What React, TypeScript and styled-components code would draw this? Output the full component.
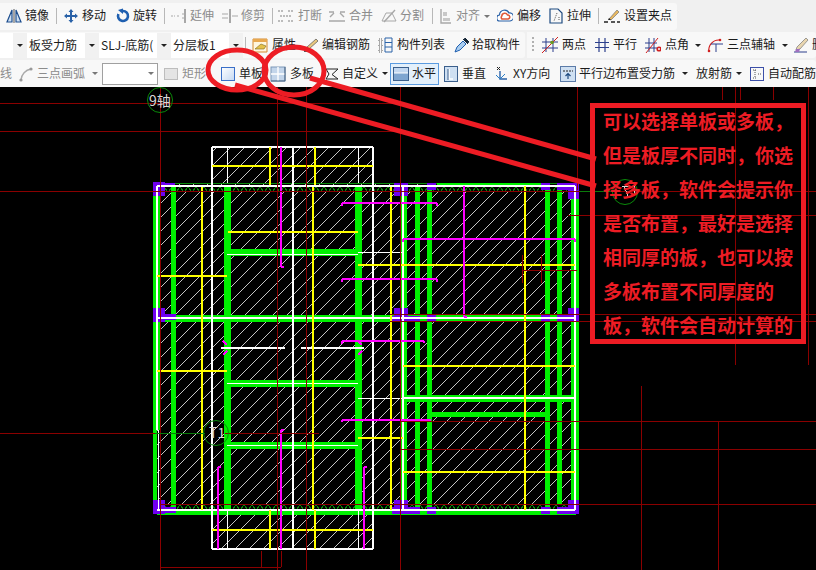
import { ReactNode } from "react";
import styled, { createGlobalStyle } from "styled-components";

const GlobalStyle = createGlobalStyle`
  html, body {
    margin: 0;
    background: #000;
    overflow: hidden;
  }
`;

type IconProps = { children: ReactNode };

function Ico({ children }: IconProps) {
  return (
    <svg width="16" height="16" viewBox="0 0 16 16" fill="none">
      {children}
    </svg>
  );
}

const MirrorIcon = () => (
  <Ico>
    <path d="M6 2 L1 14 H6 Z M10 2 L15 14 H10 Z" stroke="#1f4f8f" strokeWidth="1.2" fill="#cfe0f2" />
    <path d="M8 1 V15" stroke="#555" />
  </Ico>
);
const MoveIcon = () => (
  <Ico>
    <path d="M8 1 L10.5 4 H9 V7 H12 V5.5 L15 8 L12 10.5 V9 H9 V12 H10.5 L8 15 L5.5 12 H7 V9 H4 V10.5 L1 8 L4 5.5 V7 H7 V4 H5.5 Z" fill="#2a62a8" />
  </Ico>
);
const RotateIcon = () => (
  <Ico>
    <path d="M8 3 A5 5 0 1 1 3.4 6" stroke="#1f5fb0" strokeWidth="2.6" />
    <path d="M3 2 L8 0.5 V6 Z" fill="#1f5fb0" />
  </Ico>
);
const ExtendIcon = () => (
  <Ico>
    <path d="M0 8 H4 M6 8 H9 M11 6 H13 M11 10 H13" stroke="#a8a8a8" strokeDasharray="2 1" />
    <path d="M14 1 V15" stroke="#a8a8a8" strokeWidth="2" />
  </Ico>
);
const TrimIcon = () => (
  <Ico>
    <path d="M0 6 H6 M0 10 H6 M10 8 H16" stroke="#a8a8a8" />
    <path d="M8 1 V15" stroke="#a8a8a8" strokeWidth="2" />
  </Ico>
);
const BreakIcon = () => (
  <Ico>
    <path d="M0 3 H6 M10 3 H16 M0 13 H6 M10 13 H16 M2 8 H14" stroke="#a8a8a8" strokeWidth="1.4" strokeDasharray="2 1" />
  </Ico>
);
const MergeIcon = () => (
  <Ico>
    <path d="M0 13 H16 M1 9 L5 5 M15 9 L11 5 M0 4 H5 M11 4 H16" stroke="#a8a8a8" strokeWidth="1.4" />
  </Ico>
);
const SplitIcon = () => (
  <Ico>
    <path d="M1 13 H15 L11 5 H5 Z" stroke="#a8a8a8" />
    <path d="M3 14 L14 2" stroke="#a8a8a8" strokeWidth="1.4" />
  </Ico>
);
const AlignIcon = () => (
  <Ico>
    <path d="M2 1 V15 H12" stroke="#a8a8a8" strokeWidth="1.4" />
    <path d="M4 4 H8 V8 H4 Z M4 10 H11 V13 H4 Z" fill="#c8c8c8" />
  </Ico>
);
const OffsetIcon = () => (
  <Ico>
    <path d="M3 13 A3 3 0 0 1 2.5 7 A5 5 0 0 1 12 5 A4 4 0 0 1 13 13 Z" stroke="#2a62a8" strokeWidth="1.2" fill="#fff" />
    <path d="M5 11 A2 2 0 0 1 4.8 8 A3 3 0 0 1 10.5 7 A2 2 0 0 1 11 11 Z" stroke="#e05a3a" strokeWidth="1.6" />
  </Ico>
);
const StretchIcon = () => (
  <Ico>
    <path d="M2 1 H10 L14 5 V15 H2 Z" stroke="#1d4a80" strokeWidth="1.2" />
    <path d="M9 5 L6 13 M11 9 L11 13" stroke="#555" strokeDasharray="1 1" />
  </Ico>
);
const GripIcon = () => (
  <Ico>
    <path d="M0 14 H4 M7 14 H11 M13 14 H16" stroke="#222" strokeWidth="1.6" />
    <path d="M5 11 L13 2 L15 4 L7 12 Z" fill="#e8b860" stroke="#777" strokeWidth="0.7" />
    <path d="M4 12 L5 10 L7 12 Z" fill="#222" />
  </Ico>
);
const PropsIcon = () => (
  <Ico>
    <path d="M1 2 H15 V15 H1 Z" stroke="#d48a30" fill="#fff6df" />
    <path d="M1 2 H15 V5 H1 Z" fill="#e8a850" />
    <path d="M3 12 L9 7 L14 9 L12 12 Z" fill="#e5c14a" stroke="#7a6a20" strokeWidth="0.6" />
  </Ico>
);
const EditBarIcon = () => (
  <Ico>
    <path d="M1 14 H11" stroke="#222" strokeWidth="1.4" />
    <path d="M4 10 L13 2 L15 4 L6 12 L3 13 Z" fill="#e8c880" stroke="#555" strokeWidth="0.7" />
  </Ico>
);
const ListIcon = () => (
  <Ico>
    <path d="M1 2 H4 V5 H1 Z M1 7 H4 V10 H1 Z M1 12 H4 V15 H1 Z" stroke="#333" strokeWidth="0.8" strokeDasharray="1 1" />
    <path d="M7 1 H14 V15 H7 Z M7 5.5 H14 M7 10 H14" stroke="#2a62a8" />
  </Ico>
);
const PickIcon = () => (
  <Ico>
    <path d="M1 15 L3 10 L9 4 L12 7 L6 13 Z" fill="#a9cdf0" stroke="#1f5fb0" />
    <path d="M9 2 L14 7 M11 1 L15 5 L13 6 L10 3 Z" fill="#123" stroke="#123" />
  </Ico>
);
const TwoPointIcon = () => (
  <Ico>
    <path d="M0 5 H16 M0 11 H16 M4 1 V15" stroke="#2c3f8c" />
    <path d="M11 1 V15" stroke="#2c3f8c" />
    <path d="M0 16 L16 0" stroke="#d02020" />
    <circle cx="10" cy="5.5" r="1.8" fill="#6a9a20" />
  </Ico>
);
const ParallelIcon = () => (
  <Ico>
    <path d="M1 5.5 H15 M1 10.5 H15 M5 1 V15 M11 1 V15" stroke="#2c3f8c" strokeWidth="1.2" />
  </Ico>
);
const AngleIcon = () => (
  <Ico>
    <path d="M0 6 H12 M0 11 H12 M4 1 V15 M9 1 V15" stroke="#2c3f8c" />
    <path d="M1 16 L13 1" stroke="#d02020" />
    <circle cx="14" cy="12" r="1.8" stroke="#d02020" strokeWidth="1.6" />
  </Ico>
);
const ArcAxisIcon = () => (
  <Ico>
    <path d="M2 15 A10 10 0 0 1 12 3" stroke="#d02020" strokeWidth="1.2" />
    <path d="M4 7 H16 M9 7 V15" stroke="#2c3f8c" />
    <circle cx="2" cy="14" r="1.3" fill="#d02020" />
    <circle cx="13" cy="3" r="1.3" fill="#d02020" />
  </Ico>
);
const DeleteAxisIcon = () => (
  <Ico>
    <path d="M1 15 H14" stroke="#2c3f8c" />
    <path d="M4 10 L13 1 L15 3 L7 12 L3 13 Z" fill="#e9d6b0" stroke="#777" strokeWidth="0.7" />
    <path d="M3 12 L7 12 L6 15 H2 Z" fill="#a070c0" />
  </Ico>
);
const ArcIcon = () => (
  <Ico>
    <path d="M3 14 A12 12 0 0 1 13 3" stroke="#aaa" strokeWidth="1.4" />
    <circle cx="3" cy="14" r="1.6" fill="#999" />
    <circle cx="13" cy="3" r="1.6" fill="#999" />
  </Ico>
);
const RectIcon = () => (
  <Ico>
    <rect x="1.5" y="2.5" width="13" height="11" fill="#e4e4e4" stroke="#bdbdbd" />
  </Ico>
);
const SinglePlateIcon = () => (
  <Ico>
    <defs>
      <linearGradient id="plate" x1="0" y1="0" x2="1" y2="1">
        <stop offset="0" stopColor="#fff" />
        <stop offset="1" stopColor="#c5d8f2" />
      </linearGradient>
    </defs>
    <rect x="1.5" y="1.5" width="13" height="13" fill="url(#plate)" stroke="#3a6fc8" />
  </Ico>
);
const MultiPlateIcon = () => (
  <Ico>
    <rect x="1" y="1" width="14" height="14" fill="#c3d5ea" stroke="#7c97b8" />
    <path d="M8 1 V15 M1 8 H15" stroke="#fff" strokeWidth="1.4" />
    <path d="M15 1 V15 H1" stroke="#44607f" />
  </Ico>
);
const CustomIcon = () => (
  <Ico>
    <path d="M2 3 H14 L8 8.5 L14 13 H2 L5 8 Z" stroke="#222" />
  </Ico>
);
const HorizontalIcon = () => (
  <Ico>
    <rect x="0.5" y="1.5" width="15" height="13" fill="#c3d8f0" stroke="#3b5f8c" />
    <path d="M1 7 H15 V14 H1 Z" fill="#7fa6d0" />
    <path d="M1 7 H15" stroke="#fff" />
  </Ico>
);
const VerticalIcon = () => (
  <Ico>
    <rect x="1.5" y="0.5" width="13" height="15" fill="#cfe0f2" stroke="#3b5f8c" />
    <path d="M6 3 V13 H10" stroke="#fff" strokeWidth="1.6" />
    <path d="M5 3 V14" stroke="#3b5f8c" />
  </Ico>
);
const XYIcon = () => (
  <Ico>
    <path d="M6 5 V13 H13" stroke="#2a62a8" strokeWidth="1.4" />
    <path d="M6 13 L2 9 M6 13 L11 8" stroke="#2a7fc8" />
    <path d="M3 1 L6 4 M6 1 L3 4" stroke="#222" />
  </Ico>
);
const ParallelEdgeIcon = () => (
  <Ico>
    <rect x="0.5" y="0.5" width="15" height="15" fill="#cfe0f2" stroke="#5b7ba8" />
    <path d="M3 5 H13" stroke="#222" strokeDasharray="2 1" />
    <path d="M8 13 V8 M5.5 10 L8 7.5 L10.5 10" stroke="#1d4a80" strokeWidth="1.2" />
  </Ico>
);
const AutoBarIcon = () => (
  <Ico>
    <rect x="1.5" y="1.5" width="13" height="13" stroke="#3b4fa8" />
    <path d="M6 4 V12 M4 4 H8 M4 12 H8 M9 8 H13" stroke="#555" strokeDasharray="1 1" />
  </Ico>
);

type ToolProps = {
  w: number;
  iw?: number;
  icon?: ReactNode;
  label: string;
  muted?: boolean;
  caret?: number;
  lead?: number;
};

function Tool({ w, iw = 19, icon, label, muted, caret, lead }: ToolProps) {
  return (
    <ToolItem $w={w} $lead={lead}>
      {icon && <IconBox $w={iw}>{icon}</IconBox>}
      <ToolLabel $muted={muted}>{label}</ToolLabel>
      {caret !== undefined && <Caret $gap={caret} $muted={muted} />}
    </ToolItem>
  );
}

function Combo({ w, label }: { w: number; label?: string }) {
  return (
    <ComboBox $w={w}>
      <ComboField>{label}</ComboField>
      <ComboButton>
        <Caret $gap={0} />
      </ComboButton>
    </ComboBox>
  );
}

type Seg = [number, number, number, number];

const toPath = (segs: Seg[]) =>
  segs.map(([a, b, c, d]) => `M${a} ${b}L${c} ${d}`).join("");

const greenThick: [number, Seg[]][] = [
  [5, [[173, 187, 173, 510], [417, 187, 417, 510], [429, 187, 429, 510], [547, 187, 547, 510], [559, 187, 559, 505], [430, 414, 547, 414]]],
  [7, [[227, 187, 227, 510], [358, 187, 358, 510], [403, 187, 403, 510], [574, 187, 574, 510], [227, 252, 358, 252], [227, 383, 358, 383], [227, 445, 358, 445], [403, 398, 575, 398], [155, 318, 579, 318], [157, 187, 157, 430]]],
  [4, [[155, 183, 155, 514]]],
  [3, [[577, 183, 577, 514], [437, 184, 541, 184]]],
  [5, [[157, 512, 576, 512]]],
];

const whiteThick: Seg[] = [
  [212, 147, 373, 147], [212, 549, 373, 549], [212, 147, 212, 549], [373, 147, 373, 549], [293, 147, 293, 549],
  [157, 186, 575, 186], [157, 318, 575, 318], [157, 510, 575, 510], [157, 186, 157, 430], [403, 186, 403, 510], [575, 186, 575, 510], [403, 398, 575, 398],
  [221, 348, 285, 348], [301, 348, 364, 348],
];

const whiteThin: Seg[] = [
  [358, 252, 403, 252], [358, 398, 403, 398], [227, 254, 358, 254], [227, 383, 358, 383], [227, 445, 358, 445],
  [227, 147, 227, 183], [358, 147, 358, 183], [227, 510, 227, 549], [358, 510, 358, 549], [158, 430, 158, 510],
];

const yellow: Seg[] = [
  [202, 187, 202, 510], [313, 187, 313, 510], [391, 187, 391, 510], [525, 186, 525, 510],
  [270, 147, 270, 185], [315, 147, 315, 185], [270, 510, 270, 549], [315, 510, 315, 549],
  [212, 166, 373, 166], [212, 530, 373, 530], [228, 232, 358, 232], [157, 276, 227, 276], [157, 371, 227, 371],
  [358, 265, 575, 265], [358, 438, 403, 438], [403, 366, 575, 366], [403, 472, 575, 472],
];

const magenta: Seg[] = [
  [281, 147, 281, 267], [281, 430, 281, 549], [218, 467, 218, 549], [364, 467, 364, 549], [464, 186, 464, 317],
  [342, 203, 437, 203], [342, 279, 437, 279], [342, 341, 424, 341], [342, 420, 431, 420], [403, 239, 575, 239],
  [342, 203, 342, 206], [437, 203, 437, 206], [342, 279, 342, 282], [437, 279, 437, 282], [342, 341, 342, 344], [424, 341, 424, 343],
  [342, 420, 342, 422], [403, 239, 403, 242], [575, 239, 575, 242], [464, 317, 467, 317], [281, 267, 284, 267], [281, 430, 284, 430],
  [218, 467, 221, 467], [364, 467, 367, 467], [223, 341, 227, 345], [358, 341, 362, 345], [223, 355, 227, 351], [358, 355, 362, 351],
];

const purple: [number, number, number, number][] = [
  [153, 182, 12, 14], [158, 183, 17, 3], [153, 308, 12, 14], [158, 314, 18, 6], [153, 500, 12, 14], [158, 507, 18, 6],
  [394, 183, 14, 13], [427, 183, 9, 7], [541, 183, 9, 7], [557, 183, 11, 7], [568, 183, 11, 16],
  [394, 308, 14, 14], [392, 316, 28, 6], [427, 314, 9, 8], [541, 314, 9, 8], [557, 314, 11, 8], [568, 308, 11, 14],
  [394, 500, 14, 14], [392, 507, 28, 7], [427, 507, 9, 7], [541, 507, 9, 7], [557, 507, 11, 7], [568, 500, 11, 14],
];

const axis: Seg[] = [
  [160, 87, 160, 570], [277, 87, 277, 570], [306, 87, 306, 570], [400, 87, 400, 570], [577, 87, 577, 190],
  [641, 386, 641, 570], [718, 421, 718, 570], [735, 87, 735, 365], [808, 87, 808, 365], [722, 87, 722, 100], [740, 87, 740, 100], [773, 87, 773, 100],
  [0, 103, 400, 103], [0, 131, 400, 131], [0, 191, 816, 191], [0, 433, 155, 433], [225, 433, 319, 433],
  [160, 504, 816, 504], [400, 421, 816, 421], [400, 449, 816, 449], [390, 314, 816, 314], [390, 321, 816, 321], [568, 215, 816, 215],
  [160, 567, 281, 567], [261, 551, 261, 567], [281, 551, 281, 567], [522, 255, 522, 283], [541, 255, 541, 283], [522, 270, 577, 270],
];

const calloutLines = [
  "可以选择单板或多板，",
  "但是板厚不同时，你选",
  "择多板，软件会提示你",
  "是否布置，最好是选择",
  "相同厚的板，也可以按",
  "多板布置不同厚度的",
  "板，软件会自动计算的",
];

function PlanDrawing() {
  return (
    <DrawingSvg viewBox="0 87 816 483" shapeRendering="crispEdges">
      <defs>
        <pattern id="hatch" width="14" height="14" patternUnits="userSpaceOnUse">
          <path d="M0 14 L14 0" stroke="#c4c4c4" shapeRendering="auto" />
        </pattern>
        <pattern id="edge" width="8" height="6" patternUnits="userSpaceOnUse">
          <path d="M0 6 L4 1 L8 6" stroke="#0a8a0a" fill="none" />
        </pattern>
      </defs>
      <path d="M212 147H373V183H579V513H373V549H212V513H155V183H212Z" fill="url(#hatch)" />
      <rect x="157" y="185" width="418" height="6" fill="#000" />
      <rect x="157" y="185" width="418" height="6" fill="url(#edge)" />
      <rect x="157" y="505" width="418" height="6" fill="#000" />
      <rect x="157" y="505" width="418" height="6" fill="url(#edge)" />
      <path d="M155 183.5H579M155 191.5H579M155 513.5H576" stroke="#0a8a0a" />
      {greenThick.map(([width, segs]) => (
        <path key={width + segs.length} d={toPath(segs)} stroke="#00f000" strokeWidth={width} />
      ))}
      {purple.map(([x, y, w, h]) => (
        <rect key={`${x}-${y}`} x={x} y={y} width={w} height={h} fill="#7000f0" />
      ))}
      <path d={toPath(whiteThick)} stroke="#fff" strokeWidth="2" />
      <path d={toPath(whiteThin)} stroke="#fff" />
      <path d={toPath(yellow)} stroke="#ffff00" strokeWidth="2" />
      <path d={toPath(magenta)} stroke="#ff00ff" strokeWidth="2" />
      <path d={toPath(axis)} stroke="#8a0000" />
      <path d="M155 433H205M580 191H612" stroke="#0a7a0a" />
      <circle cx="160" cy="100" r="12.5" stroke="#0a8a0a" fill="none" shapeRendering="auto" />
      <AxisText x="149" y="106">9轴</AxisText>
      <circle cx="216" cy="433" r="12.5" stroke="#0a8a0a" fill="none" shapeRendering="auto" />
      <AxisText x="209" y="438">T1</AxisText>
      <circle cx="625" cy="192" r="12.5" stroke="#0a8a0a" fill="none" shapeRendering="auto" />
      <path d="M622 186H630M624 186L628 196M634 184V195" stroke="#d8d8d8" />
    </DrawingSvg>
  );
}

function Annotations() {
  return (
    <AnnotationSvg viewBox="0 0 816 570">
      <ellipse cx="237" cy="70" rx="29" ry="20" />
      <ellipse cx="294" cy="71" rx="30" ry="24" />
      <path d="M235 85 L596 186 M310 78 L596 159" />
    </AnnotationSvg>
  );
}

export default function App() {
  return (
    <Page>
      <GlobalStyle />
      <Toolbar>
        <Band>
          <Panel $w={677} $pad={6}>
            <Tool w={50} icon={<MirrorIcon />} label="镜像" />
            <Sep $w={7} />
            <Tool w={52} icon={<MoveIcon />} label="移动" />
            <Tool w={49} iw={18} icon={<RotateIcon />} label="旋转" />
            <Sep $w={7} />
            <Tool w={51} icon={<ExtendIcon />} label="延伸" muted />
            <Tool w={50} icon={<TrimIcon />} label="修剪" muted />
            <Sep $w={6} />
            <Tool w={51} iw={20} icon={<BreakIcon />} label="打断" muted />
            <Tool w={52} iw={20} icon={<MergeIcon />} label="合并" muted />
            <Tool w={51} icon={<SplitIcon />} label="分割" muted />
            <Sep $w={7} />
            <Tool w={58} iw={17} icon={<AlignIcon />} label="对齐" muted caret={4} />
            <Tool w={51} iw={20} icon={<OffsetIcon />} label="偏移" />
            <Tool w={50} icon={<StretchIcon />} label="拉伸" />
            <Sep $w={6} />
            <Tool w={73} iw={20} icon={<GripIcon />} label="设置夹点" />
          </Panel>
        </Band>
        <Band>
          <Panel $w={525}>
            <Combo w={27} />
            <Combo w={72} label="板受力筋" />
            <Combo w={72} label="SLJ-底筋(" />
            <Combo w={72} label="分层板1" />
            <Sep $w={7} $lead={2} />
            <Tool w={51} iw={20} icon={<PropsIcon />} label="属性" />
            <Tool w={75} icon={<EditBarIcon />} label="编辑钢筋" />
            <Tool w={76} icon={<ListIcon />} label="构件列表" />
            <Tool w={71} iw={18} icon={<PickIcon />} label="拾取构件" />
          </Panel>
          <Panel $w={289}>
            <Grip />
            <Tool w={52} iw={20} icon={<TwoPointIcon />} label="两点" />
            <Tool w={51} icon={<ParallelIcon />} label="平行" />
            <Tool w={62} iw={20} icon={<AngleIcon />} label="点角" caret={6} />
            <Tool w={86} iw={20} icon={<ArcAxisIcon />} label="三点辅轴" caret={7} />
            <Tool w={60} icon={<DeleteAxisIcon />} label="删除辅轴" />
          </Panel>
        </Band>
        <Band>
          <Panel $w={816}>
            <Tool w={18} label="线" muted />
            <Tool w={84} icon={<ArcIcon />} label="三点画弧" muted caret={7} />
            <SelectBox>
              <Caret $gap={0} $muted />
            </SelectBox>
            <Tool w={57} icon={<RectIcon />} label="矩形" muted />
            <Tool w={50} icon={<SinglePlateIcon />} label="单板" />
            <Tool w={54} iw={20} icon={<MultiPlateIcon />} label="多板" />
            <Tool w={66} iw={18} icon={<CustomIcon />} label="自定义" caret={4} />
            <ActiveTool>
              <IconBox $w={19}>
                <HorizontalIcon />
              </IconBox>
              <ToolLabel>水平</ToolLabel>
            </ActiveTool>
            <Tool w={51} lead={4} icon={<VerticalIcon />} label="垂直" />
            <Tool w={66} icon={<XYIcon />} label="XY方向" />
            <Tool w={136} icon={<ParallelEdgeIcon />} label="平行边布置受力筋" caret={7} />
            <Tool w={53} label="放射筋" caret={4} />
            <Tool w={66} icon={<AutoBarIcon />} label="自动配筋" />
          </Panel>
        </Band>
      </Toolbar>
      <Canvas>
        <PlanDrawing />
        <Callout>
          {calloutLines.map((line) => (
            <CalloutLine key={line}>{line}</CalloutLine>
          ))}
        </Callout>
      </Canvas>
      <Annotations />
    </Page>
  );
}

const Page = styled.div`
  position: relative;
  width: 816px;
  height: 570px;
  display: flex;
  flex-direction: column;
  overflow: hidden;
  background: #000;
  font-family: "Noto Sans CJK SC", "Liberation Sans", sans-serif;
  font-size: 12px;
`;

const Toolbar = styled.div`
  height: 87px;
  padding-top: 3px;
  box-sizing: border-box;
  display: flex;
  flex-direction: column;
  gap: 2px;
  background: #f0f0f0;
  flex-shrink: 0;
`;

const Band = styled.div`
  flex: 1;
  display: flex;
  gap: 2px;
`;

const Panel = styled.div<{ $w: number; $pad?: number }>`
  width: ${(p) => p.$w}px;
  padding-left: ${(p) => p.$pad ?? 0}px;
  box-sizing: border-box;
  display: flex;
  align-items: center;
  background: #f8f8f8;
  border-radius: 0 3px 3px 0;
  overflow: hidden;
`;

const ToolItem = styled.div<{ $w: number; $lead?: number }>`
  width: ${(p) => p.$w}px;
  margin-left: ${(p) => p.$lead ?? 0}px;
  flex-shrink: 0;
  display: flex;
  align-items: center;
  white-space: nowrap;
`;

const IconBox = styled.span<{ $w: number }>`
  width: ${(p) => p.$w}px;
  flex-shrink: 0;
  display: flex;
  align-items: center;
`;

const ToolLabel = styled.span<{ $muted?: boolean }>`
  color: ${(p) => (p.$muted ? "#8c8c8c" : "#1c1c1c")};
  line-height: 16px;
  margin-bottom: 2px;
`;

const Caret = styled.span<{ $gap: number; $muted?: boolean }>`
  margin-left: ${(p) => p.$gap}px;
  width: 0;
  height: 0;
  border-left: 3px solid transparent;
  border-right: 3px solid transparent;
  border-top: 3px solid ${(p) => (p.$muted ? "#777" : "#222")};
`;

const Sep = styled.span<{ $w: number; $lead?: number }>`
  width: ${(p) => p.$w}px;
  margin-left: ${(p) => p.$lead ?? 0}px;
  height: 16px;
  flex-shrink: 0;
  box-sizing: border-box;
  border-left: 1px solid #b8b8b8;
`;

const Grip = styled.span`
  width: 10px;
  margin-left: 5px;
  height: 16px;
  flex-shrink: 0;
  box-sizing: border-box;
  background: repeating-linear-gradient(#b0b0b0 0 2px, transparent 2px 4px) left / 2px 100% no-repeat;
`;

const ComboBox = styled.div<{ $w: number }>`
  width: ${(p) => p.$w}px;
  height: 25px;
  flex-shrink: 0;
  display: flex;
`;

const ComboField = styled.div`
  flex: 1;
  min-width: 0;
  padding-left: 2px;
  overflow: hidden;
  white-space: nowrap;
  background: #fff;
  color: #1c1c1c;
  line-height: 23px;
`;

const ComboButton = styled.div`
  width: 14px;
  flex-shrink: 0;
  display: flex;
  align-items: center;
  justify-content: center;
  background: #f1f1f1;
`;

const SelectBox = styled.div`
  width: 56px;
  height: 22px;
  margin-right: 5px;
  padding-right: 3px;
  box-sizing: border-box;
  flex-shrink: 0;
  display: flex;
  align-items: center;
  justify-content: flex-end;
  border: 1px solid #a0a0a0;
  background: #fff;
`;

const ActiveTool = styled.div`
  width: 49px;
  height: 22px;
  padding-left: 2px;
  box-sizing: border-box;
  flex-shrink: 0;
  display: flex;
  align-items: center;
  background: #e3f0fb;
  border: 1px solid #5a9be0;
`;

const Canvas = styled.div`
  position: relative;
  flex: 1;
  background: #000;
`;

const DrawingSvg = styled.svg`
  display: block;
  width: 816px;
  height: 483px;
  fill: none;
`;

const AxisText = styled.text`
  fill: #d8d8d8;
  font-family: "Noto Sans CJK SC", "Liberation Sans", sans-serif;
  font-size: 14px;
`;

const Callout = styled.div`
  position: absolute;
  left: 590px;
  top: 16px;
  width: 216px;
  height: 241px;
  padding-left: 8px;
  box-sizing: border-box;
  border: 5px solid #ed1c24;
`;

const CalloutLine = styled.div`
  height: 34px;
  line-height: 34px;
  color: #ed1c24;
  font-size: 19px;
  font-weight: 700;
  white-space: nowrap;

  &:first-child {
    margin-top: -4px;
  }
`;

const AnnotationSvg = styled.svg`
  position: absolute;
  left: 0;
  top: 0;
  width: 816px;
  height: 570px;
  pointer-events: none;
  fill: none;
  stroke: #ed1c24;
  stroke-width: 5;
`;
